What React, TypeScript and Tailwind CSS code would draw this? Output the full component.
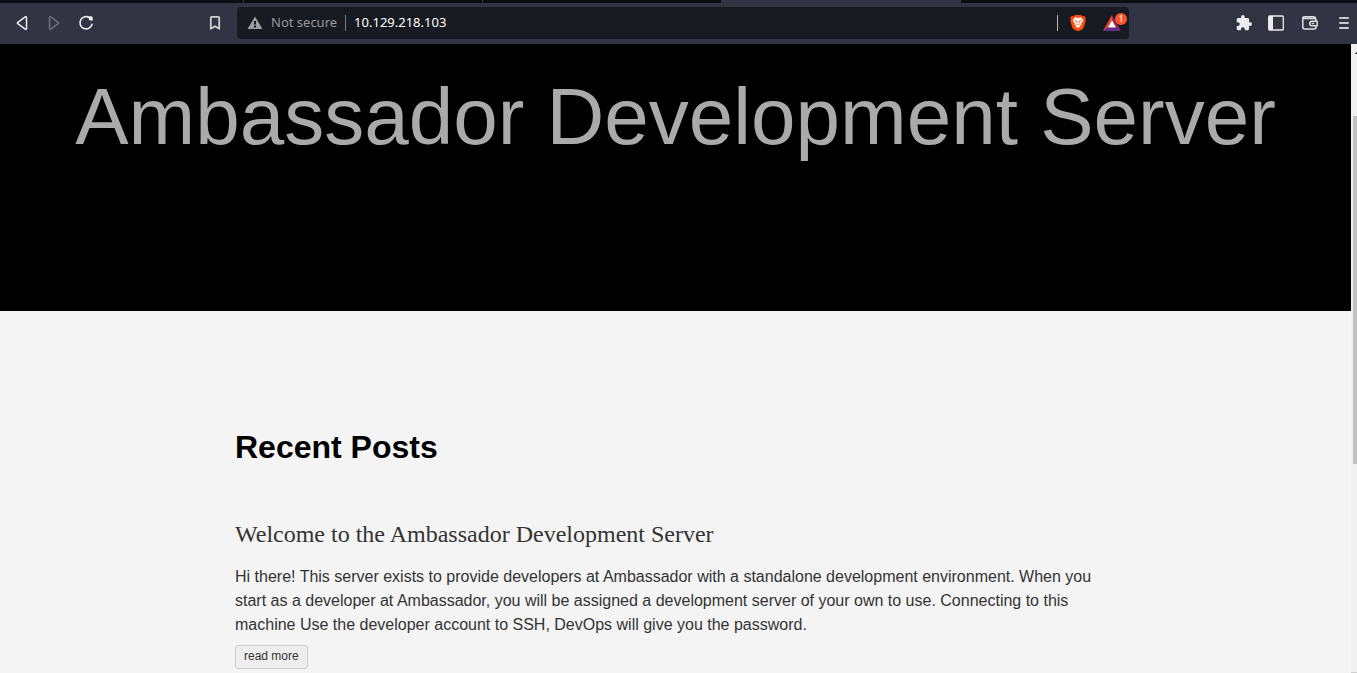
import React from "react";

const iconButton = "flex h-8 w-8 shrink-0 items-center justify-center text-[#ececee]";

function TabStrip() {
  return (
    <div className="flex h-[3px] shrink-0 bg-[#0c0c15]">
      <div className="w-[244px] border-r border-[#34343d]" />
      <div className="w-[239px] border-r border-[#34343d]" />
      <div className="w-[238px]" />
      <div className="w-[240px] bg-[#323443]" />
    </div>
  );
}

function BackIcon() {
  return (
    <svg width="16" height="16" viewBox="0 0 16 16" fill="none" stroke="currentColor" strokeWidth="1.5" strokeLinejoin="round">
      <path d="M11.2 1.9c.8-.5 1.3-.2 1.3.6v11c0 .8-.5 1.1-1.3.6L3.8 8.7c-.6-.4-.6-1 0-1.4z" />
    </svg>
  );
}

function ReloadIcon() {
  return (
    <svg width="16" height="16" viewBox="0 0 16 16" fill="none">
      <path d="M11.6 2.8A6.1 6.1 0 1 0 14 9.2" stroke="currentColor" strokeWidth="1.6" strokeLinecap="round" />
      <path d="M11 1.3h1.8c1.2 0 2 .8 2 2v2.3h-2.2c-1.2 0-1.8-.6-1.8-1.8z" fill="currentColor" />
    </svg>
  );
}

function BookmarkIcon() {
  return (
    <svg width="16" height="16" viewBox="0 0 16 16" fill="none" stroke="currentColor" strokeWidth="1.8" strokeLinejoin="round">
      <path d="M3.8 2.6c0-.6.4-.8 1-.8h6.4c.6 0 1 .2 1 .8v11.2L8 11.2l-4.2 2.6z" />
    </svg>
  );
}

function WarningIcon() {
  return (
    <svg width="16" height="16" viewBox="0 0 16 16" fill="#9a9da2" className="shrink-0">
      <path fillRule="evenodd" d="M8 1.5 15.5 14H.5zM7 6v3.5h2V6zm0 4.5v2h2v-2z" />
    </svg>
  );
}

function BraveIcon() {
  return (
    <svg width="16" height="18" viewBox="0 0 16 20" preserveAspectRatio="none">
      <path d="M5 1h6l1.5 1.5 1.8-.2 1.5 2.2-.6 1.6.5 1.7-2 7.3c-.3 1-.8 1.6-1.6 2.2L8 19.3l-4.1-2c-.8-.6-1.3-1.2-1.6-2.2L.3 7.8l.5-1.7-.6-1.6 1.5-2.2 1.8.2z" fill="#fb4d0b" />
      <path d="m8 4.4 2.8-.7 2.5 3.2-.6 1.3-1.6 2.1.5 1.4-2 1.2 1 .8L8 15.5l-2.6-1.8 1-.8-2-1.2.5-1.4-1.6-2.1-.6-1.3 2.5-3.2z" fill="#fff" />
      <path d="m4.3 7.2 2.4.5.2 2.8M11.7 7.2l-2.4.5-.2 2.8M6.5 11.5 8 12.4l1.5-.9" fill="none" stroke="#fb4d0b" strokeWidth=".8" />
    </svg>
  );
}

function RewardsIcon() {
  return (
    <svg width="18" height="16" viewBox="0 0 18 16">
      <path d="M9 0 0 16l5-3.4 4-7.2z" fill="#ef472c" />
      <path d="m9 0 9 16-5-3.4-4-7.2z" fill="#99265b" />
      <path d="M0 16h18l-5-3.4H5z" fill="#672a91" />
      <path d="m9 5.3 4 7.2H5z" fill="#fff" />
    </svg>
  );
}

function PuzzleIcon() {
  return (
    <svg width="16" height="16" viewBox="1 1 22 22" fill="currentColor">
      <path d="M20.5 11H19V7c0-1.1-.9-2-2-2h-4V3.5a2.5 2.5 0 0 0-5 0V5H4c-1.1 0-2 .9-2 2v3.8h1.5a2.7 2.7 0 0 1 0 5.4H2V20c0 1.1.9 2 2 2h3.8v-1.5a2.7 2.7 0 0 1 5.4 0V22H17c1.1 0 2-.9 2-2v-4h1.5a2.5 2.5 0 0 0 0-5z" />
    </svg>
  );
}

function SidebarIcon() {
  return (
    <svg width="16" height="16" viewBox="0 0 16 16">
      <rect x=".7" y="1" width="14.6" height="14" rx="1" fill="none" stroke="currentColor" strokeWidth="1.3" />
      <path d="M1 1h4v14H1z" fill="currentColor" />
    </svg>
  );
}

function WalletIcon() {
  return (
    <svg width="16" height="16" viewBox="0 0 16 16" fill="none" stroke="currentColor" strokeWidth="1.5" strokeLinecap="round" strokeLinejoin="round">
      <path d="M14 6V5c0-.9-.6-1.5-1.4-1.5H2.2C1.3 3.5.8 3.1.8 2.7c0-.7.6-1 1.4-1h9.4c1.1 0 2 .6 2.2 1.9M.8 2.7v9.2c0 1.3.8 2 2 2H12c1.3 0 2-.7 2-2v-1" />
      <path d="M15.2 6.2H10a2.3 2.3 0 0 0 0 4.6h5.2zM10.3 8.5h1.3" />
    </svg>
  );
}

function MenuIcon() {
  return (
    <svg width="12" height="14" viewBox="0 0 12 14" fill="none" stroke="#c9cacc" strokeWidth="2" strokeLinecap="round">
      <path d="M2 2h8M2 7h8M2 12h8" />
    </svg>
  );
}

function Toolbar() {
  return (
    <div className="flex h-[41px] shrink-0 items-start bg-[#323443] pt-1 pl-1.5">
      <button type="button" aria-label="Back" className={iconButton}>
        <BackIcon />
      </button>
      <button type="button" aria-label="Forward" disabled className="flex h-8 w-8 shrink-0 items-center justify-center text-[#6d6f7b]">
        <span className="rotate-180"><BackIcon /></span>
      </button>
      <button type="button" aria-label="Reload" className={iconButton}>
        <ReloadIcon />
      </button>
      <button type="button" aria-label="Bookmark this page" className="ml-auto flex h-8 w-8 shrink-0 items-center justify-center text-[#d0d0d2]">
        <BookmarkIcon />
      </button>
      <div className="mr-0.5 ml-1.5 flex h-8 w-[892px] min-w-0 items-center rounded bg-[#181a21] pl-2.5 font-['Noto_Sans',sans-serif] text-[13px]">
        <WarningIcon />
        <span className="ml-2 shrink-0 text-[#96989c]">Not secure</span>
        <span className="mx-2 h-4 w-px shrink-0 bg-[#77797e]" />
        <input
          type="text"
          aria-label="Address"
          defaultValue="10.129.218.103"
          className="min-w-0 flex-1 bg-transparent text-white outline-none"
        />
        <span className="h-4 w-px shrink-0 bg-[#b9babd]" />
        <button type="button" aria-label="Brave Shields" className="ml-1 flex h-8 w-8 shrink-0 items-center justify-center">
          <BraveIcon />
        </button>
        <button type="button" aria-label="Brave Rewards" className="relative flex h-8 w-[35px] shrink-0 items-center justify-center">
          <RewardsIcon />
          <span className="absolute top-1.5 right-0.5 flex h-3 w-3 items-center justify-center rounded-full bg-[#fb542b] text-[9px] leading-3 text-white">
            1
          </span>
        </button>
      </div>
      <div className="ml-auto flex shrink-0 items-center">
        <button type="button" aria-label="Extensions" className={iconButton}>
          <PuzzleIcon />
        </button>
        <button type="button" aria-label="Sidebar" className={iconButton}>
          <SidebarIcon />
        </button>
        <button type="button" aria-label="Wallet" className="ml-0.5 flex h-8 w-8 shrink-0 items-center justify-center text-[#dfdfe1]">
          <WalletIcon />
        </button>
        <button type="button" aria-label="Menu" className="flex h-8 w-[31px] shrink-0 items-center justify-end pr-[7px]">
          <MenuIcon />
        </button>
      </div>
    </div>
  );
}

function Scrollbar() {
  return (
    <div aria-hidden="true" className="flex w-1.5 shrink-0 flex-col items-end bg-[#f0f0f0]">
      <svg width="4" height="72" viewBox="0 0 4 72" className="shrink-0">
        <path d="M2 10V9h1V8h1v2z" fill="#505050" />
      </svg>
      <div className="h-[348px] w-1 bg-[#c0c0c0]" />
      <div className="mt-auto h-px w-full bg-[#cfcfcf]" />
    </div>
  );
}

export default function App() {
  return (
    <div className="flex h-screen flex-col overflow-hidden">
      <TabStrip />
      <Toolbar />
      <div className="flex min-h-0 flex-1">
        <div className="min-w-0 flex-1 overflow-hidden bg-[#f4f4f4] font-['Liberation_Sans',Arial,sans-serif] text-[#333333]">
          <header className="bg-black px-4 pt-[23px] pb-36">
            <h1 className="text-center text-[80px] leading-[100px] text-[#aaaaaa]">Ambassador Development Server</h1>
          </header>
          <main className="mx-auto w-[881px] max-w-full pt-[116px]">
            <h2 className="text-[32px] leading-10 font-bold text-black">Recent Posts</h2>
            <article className="pt-[52px]">
              <h3 className="font-['Liberation_Serif','Times_New_Roman',serif] text-2xl leading-[30px]">
                <a href="#post">Welcome to the Ambassador Development Server</a>
              </h3>
              <p className="mt-4 text-base leading-6">
                Hi there! This server exists to provide developers at Ambassador with a standalone development environment. When you start as a developer at Ambassador, you will be assigned a development server of your own to use. Connecting to this machine Use the developer account to SSH, DevOps will give you the password.
              </p>
              <a href="#post" className="mt-2 inline-block rounded-[3px] border border-[#cccccc] bg-[#eeeeee] px-2 pt-[3px] pb-[5px] text-xs leading-[14px]">
                read more
              </a>
            </article>
          </main>
        </div>
        <Scrollbar />
      </div>
    </div>
  );
}
